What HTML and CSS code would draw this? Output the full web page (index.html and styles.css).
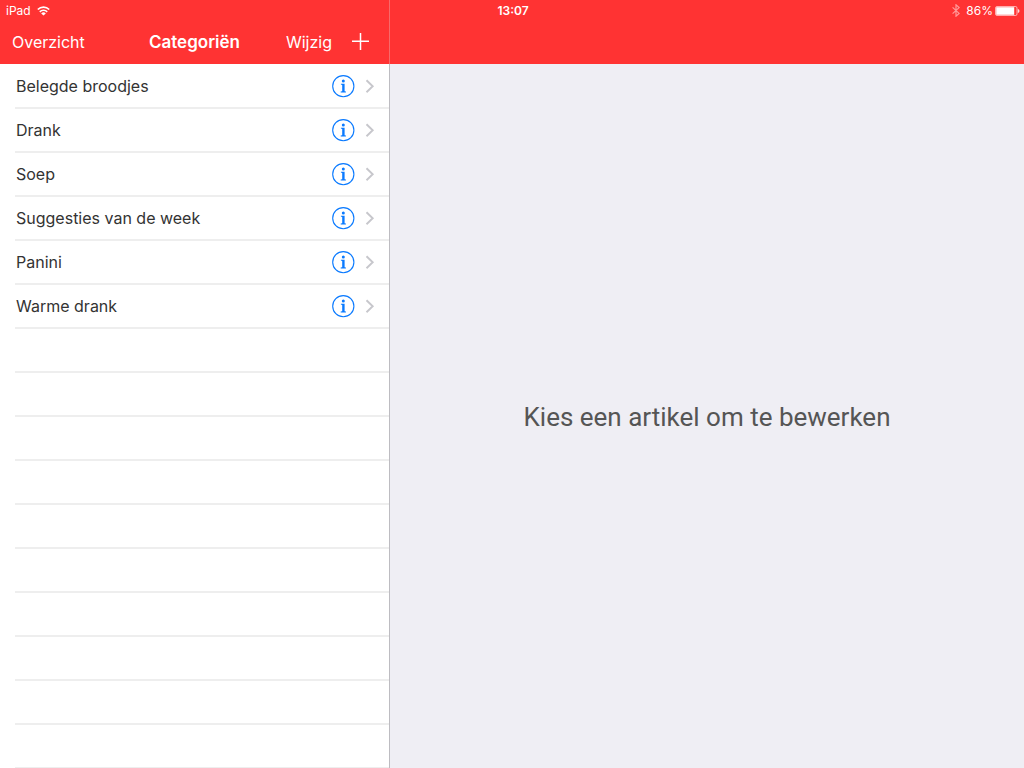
FILE: index.html
```
<!DOCTYPE html>
<html lang="nl">
<head>
<meta charset="utf-8">
<meta name="viewport" content="width=device-width, initial-scale=1">
<title>Categoriën</title>
<link rel="stylesheet" href="styles.css">
</head>
<body>
<svg class="sprite" aria-hidden="true">
  <symbol id="info" viewBox="0 0 24 24">
    <circle cx="12.3" cy="12.2" r="10.6" fill="none" stroke="currentColor" stroke-width="1.1"/>
    <circle cx="12.3" cy="6.9" r="1.5" fill="currentColor"/>
    <path d="M9.9 9.8h3.7v7.5l1.3.3v.8H9.7v-.8l1.5-.3v-6.4l-1.3-.3z" fill="currentColor"/>
  </symbol>
  <symbol id="chevron" viewBox="0 0 10 14">
    <path d="M1.5 1.2l6.2 6-6.2 6" fill="none" stroke="currentColor" stroke-width="1.9"/>
  </symbol>
</svg>
<div class="app">
  <div class="status">
    <div class="status-left">
      <span>iPad</span>
      <svg class="wifi" viewBox="0 0 13 10" aria-hidden="true">
        <path d="M.8 3.5a8.2 8.2 0 0 1 11.4 0M2.8 5.8a5.2 5.2 0 0 1 7.4 0" fill="none" stroke="currentColor" stroke-width="1.7"/>
        <path d="M6.5 9.6L4.2 7.4a3.2 3.2 0 0 1 4.6 0z" fill="currentColor"/>
      </svg>
    </div>
    <time class="clock">13:07</time>
    <div class="status-right">
      <svg class="bluetooth" viewBox="0 0 8 13" aria-hidden="true">
        <path d="M.6 3.4l6.5 6L4 12.2V.8l3.1 2.8-6.5 6" fill="none" stroke="currentColor" stroke-width="1.2"/>
      </svg>
      <span>86%</span>
      <svg class="battery" viewBox="0 0 25 10" aria-hidden="true">
        <rect x=".5" y=".5" width="21.5" height="9" rx="1.5" fill="none" stroke="currentColor" stroke-opacity=".6"/>
        <rect x="1.2" y="1.2" width="18" height="7.6" fill="currentColor"/>
        <path d="M22.8 3c2.2.5 2.2 3.5 0 4z" fill="currentColor" fill-opacity=".8"/>
      </svg>
    </div>
  </div>

  <aside class="master">
    <header class="bar">
      <button class="bar-button" type="button">Overzicht</button>
      <h1 class="title">Categoriën</h1>
      <div class="actions">
        <button class="bar-button" type="button">Wijzig</button>
        <button class="bar-button" type="button" aria-label="Toevoegen">
          <svg class="plus" viewBox="0 0 18 18" aria-hidden="true"><path d="M8.5 0v17M0 8.3h17" stroke="currentColor" stroke-width="1.5"/></svg>
        </button>
      </div>
    </header>
    <ul class="list">
      <li class="row"><span class="name">Belegde broodjes</span><button class="info-button" type="button" aria-label="Info Belegde broodjes"><svg class="info"><use href="#info"/></svg></button><svg class="chevron"><use href="#chevron"/></svg></li>
      <li class="row"><span class="name">Drank</span><button class="info-button" type="button" aria-label="Info Drank"><svg class="info"><use href="#info"/></svg></button><svg class="chevron"><use href="#chevron"/></svg></li>
      <li class="row"><span class="name">Soep</span><button class="info-button" type="button" aria-label="Info Soep"><svg class="info"><use href="#info"/></svg></button><svg class="chevron"><use href="#chevron"/></svg></li>
      <li class="row"><span class="name">Suggesties van de week</span><button class="info-button" type="button" aria-label="Info Suggesties van de week"><svg class="info"><use href="#info"/></svg></button><svg class="chevron"><use href="#chevron"/></svg></li>
      <li class="row"><span class="name">Panini</span><button class="info-button" type="button" aria-label="Info Panini"><svg class="info"><use href="#info"/></svg></button><svg class="chevron"><use href="#chevron"/></svg></li>
      <li class="row"><span class="name">Warme drank</span><button class="info-button" type="button" aria-label="Info Warme drank"><svg class="info"><use href="#info"/></svg></button><svg class="chevron"><use href="#chevron"/></svg></li>
      <li class="row"></li>
      <li class="row"></li>
      <li class="row"></li>
      <li class="row"></li>
      <li class="row"></li>
      <li class="row"></li>
      <li class="row"></li>
      <li class="row"></li>
      <li class="row"></li>
      <li class="row"></li>
    </ul>
  </aside>

  <main class="detail">
    <div class="bar"></div>
    <p class="hint">Kies een artikel om te bewerken</p>
  </main>
</div>
</body>
</html>
```
FILE: styles.css
```
* {
  box-sizing: border-box;
}

body {
  margin: 0;
  font-family: Inter, Roboto, "Liberation Sans", sans-serif;
  color: #333;
}

button {
  padding: 0;
  border: 0;
  background: none;
  color: inherit;
  font: inherit;
}

svg {
  display: block;
  flex: none;
}

.sprite {
  position: absolute;
  width: 0;
  height: 0;
}

.app {
  display: grid;
  grid-template-columns: 390px 1fr;
  grid-template-rows: 100vh;
  overflow: hidden;
}

/* The status line lies over both navigation bars. */
.status {
  position: absolute;
  top: 0;
  left: 0;
  right: 0;
  display: grid;
  grid-template-columns: 1fr auto 1fr;
  align-items: center;
  height: 21px;
  padding: 0 4px 0 6px;
  color: #fff;
  font-size: 12px;
}

.status-left,
.status-right {
  display: flex;
  align-items: center;
  gap: 6px;
}

.status-right {
  justify-content: flex-end;
  gap: 2px;
}

.clock {
  font-weight: 600;
}

.wifi {
  width: 13px;
  height: 10px;
}

.bluetooth {
  width: 8px;
  height: 13px;
  margin-right: 4px;
  opacity: 0.5;
}

.battery {
  width: 25px;
  height: 10px;
}

.master,
.detail {
  display: flex;
  flex-direction: column;
  min-height: 0;
}

.master {
  background: #fff;
}

.bar {
  display: grid;
  grid-template-columns: 1fr auto 1fr;
  align-items: center;
  flex: none;
  height: 64px;
  padding: 20px 12px 0;
  background: #f33;
  color: #fff;
  font-size: 16px;
}

.master .bar {
  border-right: 1px solid #f76a6a;
}

.bar-button {
  justify-self: start;
}

.title {
  margin: 0;
  font-size: 17px;
  font-weight: 600;
}

.actions {
  display: flex;
  justify-content: flex-end;
  align-items: center;
  gap: 20px;
  padding-right: 7px;
}

.plus {
  width: 18px;
  height: 18px;
}

.list {
  flex: 1;
  min-height: 0;
  margin: 0;
  padding: 1px 0 0 15px;
  border-right: 1px solid #bdbcc1;
  overflow: hidden;
  list-style: none;
}

.row {
  display: flex;
  align-items: center;
  height: 44px;
  padding: 0 14px 0 1px;
  border-bottom: 2px solid #eee;
  font-size: 16px;
}

.name {
  flex: 1;
}

.info-button {
  color: #0a7aff;
}

.info {
  width: 24px;
  height: 24px;
}

.chevron {
  width: 10px;
  height: 14px;
  margin-left: 10px;
  color: #c7c7cc;
}

.detail {
  background: #efeef4;
}

.hint {
  display: grid;
  place-items: center;
  flex: 1;
  margin: 0;
  padding-top: 2px;
  color: #555;
  font-family: Roboto, "Liberation Sans", sans-serif;
  font-size: 26px;
}
```
